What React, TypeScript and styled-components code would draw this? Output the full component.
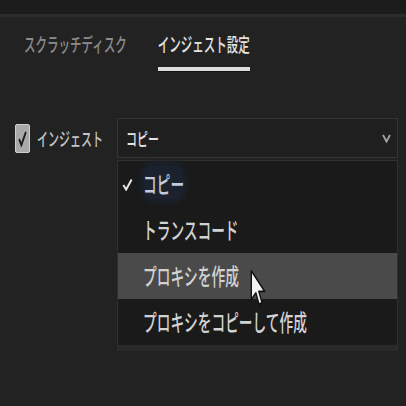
import React from "react";
import styled, { createGlobalStyle } from "styled-components";

const GlobalStyle = createGlobalStyle`
    html, body {
        margin: 0;
        padding: 0;
        background: #222222;
    }
    body {
        font-family: "Noto Sans CJK JP", "Noto Sans", sans-serif;
    }
`;

const Frame = styled.div`
    width: 406px;
    height: 406px;
    overflow: hidden;
    background: #222222;
    display: flex;
    flex-direction: column;
`;

const TopBar = styled.div`
    height: 14px;
    background: #1b1b1b;
    border-bottom: 3px solid #2c2c2c;
`;

const TabRow = styled.div`
    display: flex;
    gap: 31px;
    padding-left: 24px;
`;

const Tab = styled.div<{ $active?: boolean }>`
    display: flex;
    flex-direction: column;
    align-items: stretch;
    padding-top: 18px;
    color: ${(p) => (p.$active ? "#e4e4e4" : "#8c8c8c")};
`;

const TabLabel = styled.div`
    height: 20px;
    display: flex;
    align-items: center;
    margin-bottom: 12px;
`;

const Underline = styled.div<{ $active?: boolean }>`
    height: 4px;
    background: ${(p) => (p.$active ? "#dcdcdc" : "transparent")};
    box-shadow: ${(p) => (p.$active ? "0 1px 0 #111" : "none")};
`;

const Glyphs = styled.span<{ $size: number }>`
    display: inline-block;
    font-size: ${(p) => p.$size}px;
    font-weight: 500;
    line-height: 1;
    white-space: nowrap;
    transform: scaleY(1.7);
    transform-origin: center;
`;

const SettingRow = styled.div`
    display: flex;
    align-items: center;
    margin-top: 47px;
    padding-left: 15px;
    height: 40px;
`;

const CheckField = styled.div`
    width: 102px;
    display: flex;
    align-items: center;
    gap: 7px;
    color: #c4c4c4;
`;

const CheckBox = styled.div`
    width: 13px;
    height: 27px;
    border: 1px solid #cfcfcf;
    border-radius: 2px;
    background: #a9a9a9;
    display: flex;
    align-items: center;
    justify-content: center;
`;

const Select = styled.div`
    box-sizing: border-box;
    width: 281px;
    height: 40px;
    border: 1px solid #343434;
    background: #1f1f1f;
    display: flex;
    align-items: center;
    justify-content: space-between;
    padding: 0 6px 0 8px;
    color: #e2e2e2;
`;

const Menu = styled.div`
    box-sizing: border-box;
    width: 281px;
    margin: 2px 0 0 117px;
    background: #1a1a1a;
    border: 1px solid #303030;
    border-bottom: 6px solid #2a2a2a;
    display: flex;
    flex-direction: column;
`;

const Item = styled.div<{ $hover?: boolean }>`
    position: relative;
    height: 46px;
    display: flex;
    align-items: center;
    padding-left: 4px;
    background: ${(p) => (p.$hover ? "#4a4a4a" : "transparent")};
    color: #d2d2d2;
`;

const Mark = styled.div`
    width: 21px;
    display: flex;
    align-items: center;
`;

const Selected = styled.span`
    color: #c3cbdc;
    background: #1b222d;
    box-shadow: 0 0 4px 2px #1b222d;
    border-radius: 8px;
`;

const Pointer = styled.svg`
    position: absolute;
    left: 132px;
    top: 16px;
`;

const Chevron = () => (
    <svg width="9" height="10" viewBox="0 0 9 10">
        <polyline points="1,2 4.5,8.5 8,2" fill="none" stroke="#a4a4a4" strokeWidth="1.8" />
    </svg>
);

const Tick = ({ color, w, h }: { color: string; w: number; h: number }) => (
    <svg width={w} height={h} viewBox="0 0 12 13" preserveAspectRatio="none">
        <polyline points="1.5,7 4.5,11.5 10.5,1.5" fill="none" stroke={color} strokeWidth="2.2" />
    </svg>
);

const items = ["コピー", "トランスコード", "プロキシを作成", "プロキシをコピーして作成"];

export default function App() {
    return (
        <Frame>
            <GlobalStyle />
            <TopBar />
            <TabRow>
                <Tab>
                    <TabLabel>
                        <Glyphs $size={11.5}>スクラッチディスク</Glyphs>
                    </TabLabel>
                    <Underline />
                </Tab>
                <Tab $active>
                    <TabLabel>
                        <Glyphs $size={11.5}>インジェスト設定</Glyphs>
                    </TabLabel>
                    <Underline $active />
                </Tab>
            </TabRow>
            <SettingRow>
                <CheckField>
                    <CheckBox>
                        <Tick color="#1a1a1a" w={9} h={17} />
                    </CheckBox>
                    <Glyphs $size={11}>インジェスト</Glyphs>
                </CheckField>
                <Select>
                    <Glyphs $size={11}>コピー</Glyphs>
                    <Chevron />
                </Select>
            </SettingRow>
            <Menu>
                {items.map((label, i) => (
                    <Item key={label} $hover={i === 2}>
                        <Mark>{i === 0 && <Tick color="#e6e6e6" w={11} h={13} />}</Mark>
                        <Glyphs $size={13.7}>{i === 0 ? <Selected>{label}</Selected> : label}</Glyphs>
                        {i === 2 && (
                            <Pointer width="16" height="38" viewBox="0 0 12 20" preserveAspectRatio="none">
                                <path
                                    d="M1 1 L1 16 L4.4 12.6 L6.8 18.6 L9 17.7 L6.6 11.8 L11 11.8 Z"
                                    fill="#f2f2f2"
                                    stroke="#111"
                                    strokeWidth="1"
                                    strokeLinejoin="round"
                                />
                            </Pointer>
                        )}
                    </Item>
                ))}
            </Menu>
        </Frame>
    );
}
